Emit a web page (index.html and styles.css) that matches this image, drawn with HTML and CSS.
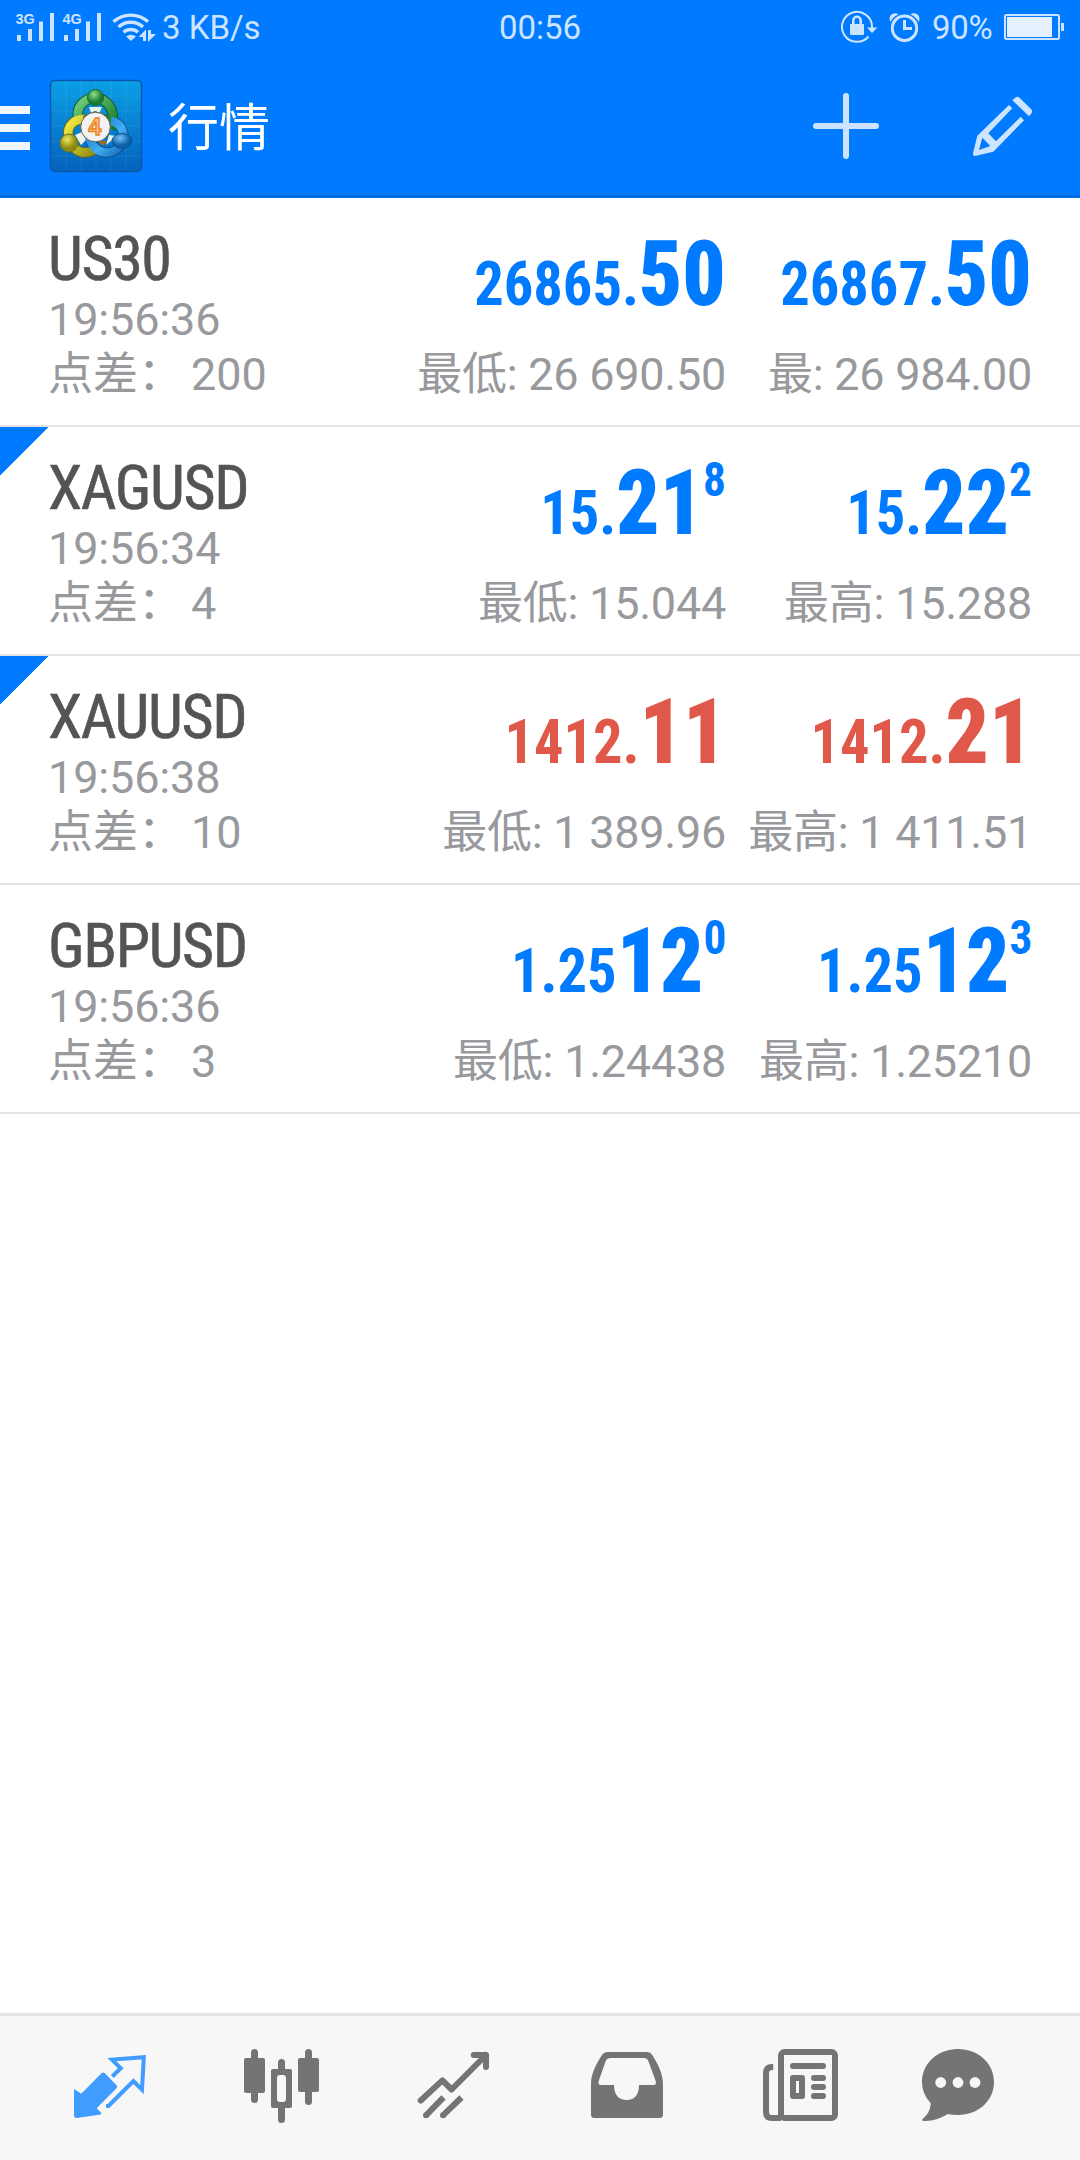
FILE: index.html
```html
<!DOCTYPE html>
<html lang="zh-CN">
<head>
<meta charset="utf-8">
<title>行情</title>
<link rel="stylesheet" href="styles.css">
</head>
<body>
<div class="app">
  <header class="header">
    <div class="status">
      <div class="status-left">
        <svg class="status-signals" width="160" height="56" viewBox="0 0 160 56">
          <text class="net" x="15.5" y="24">3G</text>
          <path d="M17 35h4v6h-4zM28 29h4v12h-4zM39 21.500h4V41h-4zM50 13h4v28h-4z"/>
          <text class="net" x="62.500" y="24">4G</text>
          <path d="M64 35h4v6h-4zM75 29h4v12h-4zM86 21.500h4V41h-4zM97 13h4v28h-4z"/>
          <g class="wifi">
            <path d="M113.500 21.800a25.500 25.500 0 0 1 34.500 0"/>
            <path d="M118.500 27a18 18 0 0 1 24.500 0"/>
            <path d="M123.500 32.300a11 11 0 0 1 14.500 0"/>
          </g>
          <path d="M126 36.500q5-3.500 10 0l-5 4.500z"/>
          <path d="M146 29.500V41h-3v-4h-4.500zM148 42V30h3v4h5z"/>
        </svg>
        <span>3 KB/s</span>
      </div>
      <span>00:56</span>
      <div class="status-right">
        <svg width="84" height="56" viewBox="840 0 84 56">
          <path class="ring" d="M868.500 36.500a15 15 0 1 1 3.500-9.500v1"/>
          <path d="M867 27.500h10.500L872 33z"/>
          <rect x="850" y="24" width="14" height="11" rx="1"/>
          <path class="shackle" d="M853.300 25v-4.500a3.600 3.600 0 0 1 7.400 0V25"/>
          <circle class="clock" cx="904.500" cy="28.300" r="12.200"/>
          <path class="clock" d="M904.500 20v8.500h7.500"/>
          <path d="M890.500 22q-2.500-4.500 1-7.500 4-2.500 7 0-5.500 2.200-8 7.500zM918.500 22q2.500-4.500-1-7.500-4-2.500-7 0 5.500 2.200 8 7.500z"/>
        </svg>
        <span class="percent">90%</span>
        <svg width="61" height="56" viewBox="1003 0 61 56">
          <rect class="cell" x="1005" y="15" width="54" height="24" rx="1.500"/>
          <path class="charge" d="M1007 17h45v20h-45z"/>
          <path d="M1061 23h3v8h-3z"/>
        </svg>
      </div>
    </div>
    <div class="appbar">
      <div class="menu"><i></i><i></i><i></i></div>
      <svg class="logo" width="94" height="94" viewBox="0 0 94 94">
        <defs>
          <linearGradient id="sky" x1="0" y1="0" x2="0" y2="1"><stop offset="0" stop-color="#0b9fe6"/><stop offset="1" stop-color="#0462bb"/></linearGradient>
          <linearGradient id="green" x1="0" y1="0" x2="1" y2="1"><stop offset="0" stop-color="#74cf7a"/><stop offset="1" stop-color="#147a2b"/></linearGradient>
          <linearGradient id="gold" x1="0" y1="0" x2="1" y2="1"><stop offset="0" stop-color="#f5ec45"/><stop offset="1" stop-color="#94900e"/></linearGradient>
          <linearGradient id="blue" x1="0" y1="0" x2="1" y2="1"><stop offset="0" stop-color="#1673c8"/><stop offset=".6" stop-color="#41aef2"/><stop offset="1" stop-color="#1269b5"/></linearGradient>
          <radialGradient id="greenBall" cx=".4" cy=".3"><stop offset="0" stop-color="#8be08c"/><stop offset="1" stop-color="#1c7b34"/></radialGradient>
          <radialGradient id="goldBall" cx=".4" cy=".3"><stop offset="0" stop-color="#eee75c"/><stop offset="1" stop-color="#8b8813"/></radialGradient>
          <radialGradient id="blueBall" cx=".4" cy=".3"><stop offset="0" stop-color="#6fc3f5"/><stop offset="1" stop-color="#0d5fa9"/></radialGradient>
        </defs>
        <rect x="1.500" y="1.500" width="91" height="91" rx="4" fill="url(#sky)" stroke="#0857ad" stroke-width="1.500"/>
        <path class="grid" d="M17 2v90M32 2v90M47 2v90M62 2v90M77 2v90M2 17h90M2 32h90M2 47h90M2 62h90M2 77h90"/>
        <g class="arm-edge">
          <path stroke="#0d5a2a" d="M30 42C25 27 37 19 46 19S69 28 62 50"/>
          <path stroke="#6c6a10" d="M36 40C22 40 16 50 21 62S36 76 45 71"/>
          <path stroke="#0b4f96" d="M62 42C74 44 78 58 71 67S46 78 40 58"/>
        </g>
        <g class="arm">
          <path stroke="url(#green)" d="M30 42C25 27 37 19 46 19S69 28 62 50"/>
          <path stroke="url(#gold)" d="M36 40C22 40 16 50 21 62S36 76 45 71"/>
          <path stroke="url(#blue)" d="M62 42C74 44 78 58 71 67S46 78 40 58"/>
        </g>
        <path fill="#eaf3ee" d="M40 28h13l-4 9h-6zM26 56l7-3 4 8-5 5zM57 66l3-10 8 1z"/>
        <path d="M34 37l12-5 14 5-3 6H36z" fill="#187a2d"/>
        <path d="M49 62h9l-4 5z" fill="#a96a12"/>
        <circle cx="46.500" cy="18.500" r="8" fill="url(#greenBall)" stroke="#156a30"/>
        <circle cx="20" cy="64" r="9" fill="url(#goldBall)" stroke="#77741a"/>
        <ellipse cx="73" cy="62" rx="10" ry="7.500" fill="url(#blueBall)" stroke="#0c5499"/>
        <circle cx="46.500" cy="48" r="14.800" fill="#f2f2f5" stroke="#63604a"/>
        <text class="four" x="46" y="56">4</text>
      </svg>
      <h1 class="title">行情</h1>
      <svg class="add" width="70" height="70" viewBox="0 0 70 70"><path d="M35 5v60M5 35h60"/></svg>
      <svg class="edit" width="66" height="66" viewBox="0 0 66 66">
        <path d="M42.300 7.300L45.500 4.600Q47.500 3 49.500 4.700L61 16Q63 18 61.700 20L59 23.300z"/>
        <path fill-rule="evenodd" d="M39 12L7.300 42.700 3 60.500Q2.800 63.200 5 63L23.300 58.700 54 27.300 50.700 23.700 26 48.300 18.300 40.300 42.300 15.300zM12.300 44.700L20.300 53 9 57z"/>
      </svg>
    </div>
  </header>

  <main class="quotes">
    <section class="row">
      <div class="info"><div class="symbol">US30</div><div class="time">19:56:36</div><div class="spread">点差：<span>200</span></div></div>
      <div class="side up"><div class="price">26865.<b>50</b></div><div class="range">最低: 26 690.50</div></div>
      <div class="side up"><div class="price">26867.<b>50</b></div><div class="range">最: 26 984.00</div></div>
    </section>
    <section class="row marked">
      <div class="info"><div class="symbol">XAGUSD</div><div class="time">19:56:34</div><div class="spread">点差：<span>4</span></div></div>
      <div class="side up"><div class="price">15.<b>21</b><sup>8</sup></div><div class="range">最低: 15.044</div></div>
      <div class="side up"><div class="price">15.<b>22</b><sup>2</sup></div><div class="range">最高: 15.288</div></div>
    </section>
    <section class="row marked">
      <div class="info"><div class="symbol">XAUUSD</div><div class="time">19:56:38</div><div class="spread">点差：<span>10</span></div></div>
      <div class="side down"><div class="price">1412.<b>11</b></div><div class="range">最低: 1 389.96</div></div>
      <div class="side down"><div class="price">1412.<b>21</b></div><div class="range">最高: 1 411.51</div></div>
    </section>
    <section class="row">
      <div class="info"><div class="symbol">GBPUSD</div><div class="time">19:56:36</div><div class="spread">点差：<span>3</span></div></div>
      <div class="side up"><div class="price">1.25<b>12</b><sup>0</sup></div><div class="range">最低: 1.24438</div></div>
      <div class="side up"><div class="price">1.25<b>12</b><sup>3</sup></div><div class="range">最高: 1.25210</div></div>
    </section>
  </main>

  <nav class="tabs">
    <svg class="tab active" viewBox="0 0 84 90">
      <path d="M6 49L13.300 53.700 33.700 33Q35.200 32 36.700 33L49 45.700V47.700L28.700 68.300 33.300 73 33 74.500 8.700 78Q6 78 6 75.500z"/>
      <path class="line thin" d="M44.300 36.500L52.700 28.300 44 19.600 75.800 17.200 74 49.700 65.400 41 40.500 66H38"/>
    </svg>
    <svg class="tab" viewBox="0 0 84 90">
      <rect x="4" y="18" width="21" height="35" rx="2"/><rect x="11" y="9" width="7" height="54" rx="3.500"/>
      <rect x="58" y="18" width="21" height="34" rx="2"/><rect x="65" y="9" width="7" height="56" rx="3.500"/>
      <path d="M38 29v-6.500a3.500 3.500 0 0 1 7 0V29zM38 68v11.500a3.500 3.500 0 0 0 7 0V68z"/>
      <path fill-rule="evenodd" d="M33 29h17q2 0 2 2v35q0 2-2 2H33q-2 0-2-2V31q0-2 2-2zM40 35q-3 0-3 3v21q0 3 3 3h3q3 0 3-3V38q0-3-3-3z"/>
    </svg>
    <svg class="tab" viewBox="0 0 84 90">
      <path class="line round" d="M8.700 60.500L30.400 40.400 39.600 49.500 74 15M61.700 15H74V27"/>
      <path class="line" d="M14 75.300L31.500 57.300M31 75.300L49.500 57.500"/>
      <circle cx="14" cy="75.300" r="3"/><circle cx="31" cy="75.300" r="3"/>
    </svg>
    <svg class="tab" viewBox="0 0 84 90">
      <path fill-rule="evenodd" d="M7 44C7 34 12 24 18 15Q20 12 23.300 12H63.300Q66.500 12 68.300 15C74 24 79 34 79 44V74.500Q79 78 75.700 78H10.300Q7 78 7 74.500zM30 45C30 55 35 60 42.700 60S55 55 55 45H69.500Q72.800 45 71.700 41L64.500 21.500Q63.500 18 59.700 18H26.700Q23 18 21.700 21L14.700 41Q13.500 45 17 45z"/>
    </svg>
    <svg class="tab" viewBox="0 0 84 90">
      <rect class="line" x="25" y="12" width="54" height="66" rx="3.500"/>
      <path class="line" d="M17.200 27H16Q10 27 10 33V72Q10 78 16 78H25"/>
      <rect class="line round" x="37" y="38" width="9" height="18"/>
      <path class="line round" d="M37 26H67M58 38h9M58 47h9M58 56h9"/>
    </svg>
    <svg class="tab" viewBox="0 0 84 90">
      <path d="M30 9C50 9 66 23 66 42S50 75 30 75Q24 75 19.700 74C13 78 5 81.300-4 81Q-6.800 80.600-5.500 79C0 75 2.500 69 2.700 63.300Q-6 54-6 42C-6 23 10 9 30 9z"/>
      <g class="dots"><circle cx="12.700" cy="42.500" r="5.400"/><circle cx="30" cy="42.500" r="5.400"/><circle cx="47" cy="42.500" r="5.400"/></g>
    </svg>
  </nav>
</div>
</body>
</html>
```
FILE: styles.css
```css
* { box-sizing: border-box; }

body {
  margin: 0;
  background: #fff;
  font-family: Roboto, "Noto Sans CJK SC", sans-serif;
}

svg { display: block; overflow: visible; }

.app {
  display: flex;
  flex-direction: column;
  width: 1080px;
  height: 2160px;
}

/* Header */
.header {
  height: 198px;
  background: #007aff;
  border-bottom: 3px solid #006de4;
}

.status {
  display: grid;
  grid-template-columns: 1fr auto 1fr;
  height: 56px;
  padding-right: 16px;
  font-size: 33px;
  font-weight: 400;
  line-height: 56px;
  color: #cce4ff;
  fill: #cce4ff;
}

.status > span { padding-left: 16px; }
.status-left, .status-right { display: flex; }
.status-left { gap: 2px; }
.status-right { justify-content: flex-end; }
.percent { width: 79px; padding-left: 8px; letter-spacing: -.3px; }

.net { font: bold 14.5px "Liberation Sans", sans-serif; }
.wifi { fill: none; stroke: #cce4ff; stroke-width: 3.4; }
.ring { fill: none; stroke: #cce4ff; stroke-width: 2; }
.shackle { fill: none; stroke: #cce4ff; stroke-width: 2.6; }
.clock { fill: none; stroke: #cce4ff; stroke-width: 3; }
.cell { fill: none; stroke: #cce4ff; stroke-width: 2; }
.charge { fill: #e5f1ff; }

.appbar {
  display: flex;
  align-items: center;
  height: 140px;
}

.menu {
  display: flex;
  flex-direction: column;
  gap: 10px;
  width: 30px;
  padding-top: 4px;
}

.menu i { height: 8px; background: #f0f7ff; }

.logo { margin-left: 19px; }
.grid { fill: none; stroke: #fff; stroke-opacity: .08; }
.arm, .arm-edge { fill: none; stroke-width: 8.5; }
.arm-edge { stroke-width: 10.5; }
.four {
  font: bold 23px "Liberation Sans", sans-serif;
  text-anchor: middle;
  fill: #f8c18a;
  stroke: #ee8420;
  stroke-width: 1.4;
}

.title {
  flex: 1;
  margin: 0 0 0 25px;
  padding-top: 5px;
  font-size: 51px;
  font-weight: 400;
  line-height: 70px;
  color: #fff;
}

.add { fill: none; stroke: #cce4ff; stroke-width: 6; stroke-linecap: round; }
.edit { margin: 0 44px 0 89px; fill: #cce4ff; }

/* Quotes */
.quotes { flex: 1; }

.row {
  display: grid;
  grid-template-columns: 1fr 306px 306px;
  height: 229px;
  padding: 0 48px;
  border-bottom: 2px solid #e4e4e4;
}

.marked { background: linear-gradient(135deg, #007aff 34px, transparent 34.7px) no-repeat; }

.info { padding-top: 27px; }

.symbol {
  font-family: "Roboto Condensed", sans-serif;
  font-size: 62px;
  line-height: 68px;
  letter-spacing: -1.4px;
  color: #545454;
  -webkit-text-stroke: .6px #545454;
}

.time, .range, .spread {
  font-size: 45px;
  color: #98999c;
  white-space: nowrap;
}

.time { line-height: 54px; letter-spacing: -.15px; }
.range, .spread { line-height: 55px; }
.range { letter-spacing: -.25px; }
.spread span { margin-left: 8px; }

.side {
  display: flex;
  flex-direction: column;
  align-items: flex-end;
  padding-top: 15px;
}

.up { color: #007aff; }
.down { color: #e0584a; }

.price {
  height: 134px;
  font-family: "Roboto Condensed", sans-serif;
  font-size: 62px;
  font-weight: 700;
  line-height: 142px;
  white-space: nowrap;
  transform: scaleX(.943);
  transform-origin: right;
}

.price b { font-size: 90px; line-height: 0; }
.price sup { font-size: 48px; line-height: 0; vertical-align: 38px; }

/* Bottom tabs */
.tabs {
  display: flex;
  justify-content: space-between;
  height: 147px;
  padding: 24px 68px 0;
  border-top: 3px solid #e4e4e4;
  background: #f7f7f7;
}

.tab { width: 84px; height: 90px; fill: #747474; color: #747474; }
.active { fill: #409cff; color: #409cff; }
.line { fill: none; stroke: currentColor; stroke-width: 6; }
.thin { stroke-width: 4; }
.round { stroke-linecap: round; stroke-linejoin: round; }
.dots { fill: #f7f7f7; }
```
